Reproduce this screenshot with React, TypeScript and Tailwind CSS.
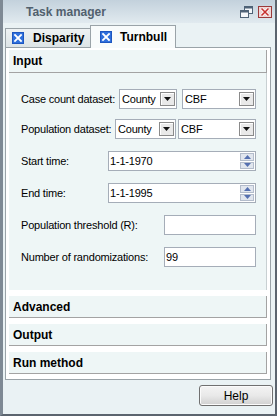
import React from "react";

const TabIcon = () => (
  <svg width="12" height="12" viewBox="0 0 12 12" className="shrink-0">
    <rect x="0.5" y="0.5" width="11" height="11" fill="#2e6fdc" stroke="#1d56c0" />
    <path d="M3 3L9 9M9 3L3 9" stroke="#ffffff" strokeWidth="1.8" strokeLinecap="square" />
  </svg>
);

const DropBtn = () => (
  <div className="w-[15px] h-[14px] shrink-0 flex items-center justify-center bg-[#e9e9e9] border border-[#8a8a8a] shadow-[inset_1px_1px_0_#ffffff]">
    <svg width="7" height="4" viewBox="0 0 7 4">
      <path d="M0 0H7L3.5 4Z" fill="#111" />
    </svg>
  </div>
);

const Select = ({ value, w }: { value: string; w?: string }) => (
  <div className={`h-[20px] ${w ?? "flex-1"} border border-[#a5adb8] bg-white flex items-center pl-[2px] pr-[1px]`}>
    <span className="flex-1 text-[11px] tracking-[-0.2px] leading-none text-black">{value}</span>
    <DropBtn />
  </div>
);

const Spinner = () => (
  <div className="w-[14px] h-[16px] flex flex-col gap-[1px] mr-[1px] shrink-0">
    <div className="flex-1 bg-[#e1e6ee] border border-[#b3bccb] flex items-center justify-center">
      <svg width="7" height="4" viewBox="0 0 7 4">
        <path d="M0 4H7L3.5 0Z" fill="#5570b0" />
      </svg>
    </div>
    <div className="flex-1 bg-[#e1e6ee] border border-[#b3bccb] flex items-center justify-center">
      <svg width="7" height="4" viewBox="0 0 7 4">
        <path d="M0 0H7L3.5 4Z" fill="#5570b0" />
      </svg>
    </div>
  </div>
);

const TextBox = ({ value, spin }: { value: string; spin?: boolean }) => (
  <div className="h-[20px] flex-1 border border-[#a5adb8] bg-white flex items-center pl-[1px]">
    <span className="flex-1 text-[11px] tracking-[-0.2px] leading-none text-black">{value}</span>
    {spin && <Spinner />}
  </div>
);

const Label = ({ text, w }: { text: string; w: string }) => (
  <div className={`${w} shrink-0 whitespace-nowrap text-[11px] tracking-[-0.2px] leading-none text-black`}>{text}</div>
);

const SectionHeader = ({ text, h }: { text: string; h: string }) => (
  <div className={`${h} border-r border-b border-[#a3a3a3] bg-[#eef6f6] flex items-center pl-[4px]`}>
    <span className="text-[12px] font-bold text-black leading-none">{text}</span>
  </div>
);

export default function App() {
  return (
    <div className="w-[279px] h-[417px] bg-white overflow-hidden flex font-['Liberation_Sans',Arial,sans-serif]">
      <div className="w-[277px] h-[416px] shrink-0 flex flex-col border-l-[3px] border-r-2 border-b-2 border-l-[#7e8994] border-r-[#5b646e] border-b-[#5b646e] bg-[#eaf2f4]">
        {/* Title bar */}
        <div className="h-[23px] shrink-0 flex items-center pl-[23px] pr-[3px] bg-gradient-to-b from-[#c3d1dc] to-[#e1eaef]">
          <span className="flex-1 text-[12px] font-bold text-[#51606e] leading-none">Task manager</span>
          <svg width="13" height="12" viewBox="0 0 13 12" className="mr-[5px]">
            <rect x="4.5" y="0.5" width="8" height="7" fill="#f4f7fa" stroke="#4f6377" />
            <rect x="4.5" y="0.5" width="8" height="2" fill="#4f6377" />
            <rect x="0.5" y="4.5" width="8" height="7" fill="#f4f7fa" stroke="#4f6377" />
            <rect x="0.5" y="4.5" width="8" height="2" fill="#4f6377" />
          </svg>
          <svg width="14" height="12" viewBox="0 0 14 12">
            <rect x="0.5" y="0.5" width="13" height="11" fill="#efd6d6" stroke="#9b3a3a" />
            <path d="M3.5 2.5L10.5 9.5M10.5 2.5L3.5 9.5" stroke="#ffffff" strokeWidth="3" />
            <path d="M3.5 2.5L10.5 9.5M10.5 2.5L3.5 9.5" stroke="#c7302e" strokeWidth="1.6" />
          </svg>
        </div>

        {/* Body */}
        <div className="flex-1 flex flex-col pl-[2px] pr-[4px] pt-[2px]">
          {/* Tabs */}
          <div className="h-[22px] flex items-end shrink-0">
            <div className="w-[85px] h-[19px] border-t border-l border-[#9aa3a8] bg-gradient-to-b from-[#eef2f3] to-[#dde4e6] flex items-center pl-[6px] gap-[9px]">
              <TabIcon />
              <span className="text-[12px] font-bold text-black leading-none">Disparity</span>
            </div>
            <div className="relative z-10 w-[86px] h-[23px] -mb-px border-t border-l border-r border-[#9aa3a8] bg-[#f8fbfb] flex items-center pl-[9px] gap-[8px] pb-[1px]">
              <TabIcon />
              <span className="text-[12px] font-bold text-black leading-none">Turnbull</span>
            </div>
          </div>

          {/* Panel */}
          <div className="border border-[#9aa3a8] bg-white pt-[2px] px-[3px] pb-[5px] flex flex-col">
            {/* Input section */}
            <div className="flex flex-col">
              <SectionHeader text="Input" h="h-[23px]" />
              <div className="h-[217px] border-r border-[#c8d0d2] bg-[#eef6f6] flex flex-col pl-[12px] pr-[10px] pt-[16px]">
                <div className="h-[20px] flex items-center">
                  <Label text="Case count dataset:" w="w-[98px]" />
                  <Select value="County" w="w-[58px]" />
                  <div className="w-[5px]" />
                  <Select value="CBF" />
                </div>
                <div className="h-[20px] flex items-center mt-[10px]">
                  <Label text="Population dataset:" w="w-[94px]" />
                  <Select value="County" w="w-[61px]" />
                  <div className="w-[2px]" />
                  <Select value="CBF" />
                </div>
                <div className="h-[20px] flex items-center mt-[12px]">
                  <Label text="Start time:" w="w-[87px]" />
                  <TextBox value="1-1-1970" spin />
                </div>
                <div className="h-[20px] flex items-center mt-[12px]">
                  <Label text="End time:" w="w-[87px]" />
                  <TextBox value="1-1-1995" spin />
                </div>
                <div className="h-[20px] flex items-center mt-[12px]">
                  <Label text="Population threshold (R):" w="w-[143px]" />
                  <TextBox value="" />
                </div>
                <div className="h-[20px] flex items-center mt-[12px]">
                  <Label text="Number of randomizations:" w="w-[143px]" />
                  <TextBox value="99" />
                </div>
              </div>
            </div>
            <div className="h-[6px]" />
            <SectionHeader text="Advanced" h="h-[22px]" />
            <div className="h-[6px]" />
            <SectionHeader text="Output" h="h-[22px]" />
            <div className="h-[6px]" />
            <SectionHeader text="Run method" h="h-[22px]" />
          </div>

          {/* Footer */}
          <div className="flex justify-end mt-[5px] -mr-[2px]">
            <div className="w-[74px] h-[21px] rounded-[3px] border border-[#707070] bg-gradient-to-b from-[#f4f4f4] via-[#e9e9e9] to-[#d0d0d0] flex items-center justify-center shadow-[inset_0_0_0_1px_#fbfbfb]">
              <span className="text-[12px] text-black leading-none">Help</span>
            </div>
          </div>
        </div>
      </div>
      <div className="flex-1 bg-white" />
    </div>
  );
}
